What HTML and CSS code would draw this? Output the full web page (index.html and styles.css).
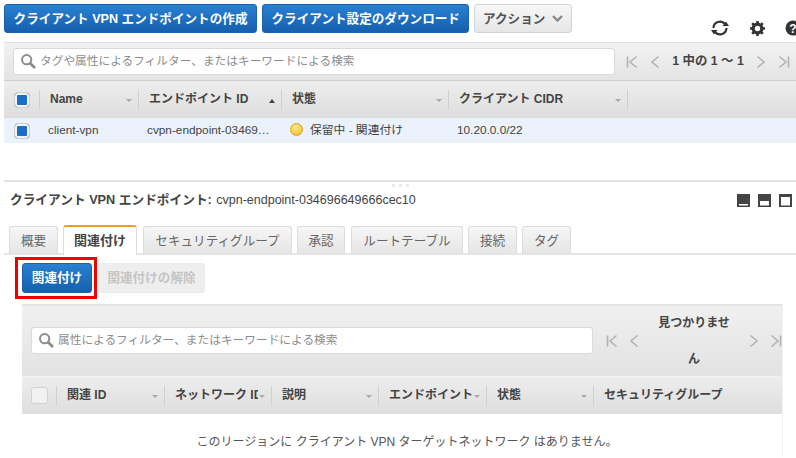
FILE: index.html
```html
<!DOCTYPE html>
<html lang="ja">
<head>
<meta charset="utf-8">
<title>クライアント VPN エンドポイント</title>
<link rel="stylesheet" href="styles.css">
</head>
<body>
<svg class="defs" width="0" height="0" aria-hidden="true">
  <defs>
    <symbol id="mag" viewBox="0 0 18 18"><circle cx="7.5" cy="7.5" r="5.2" fill="none" stroke="#8c8c8c" stroke-width="2.2"/><path d="M11.5 11.5L16 16" stroke="#8c8c8c" stroke-width="3" stroke-linecap="round"/></symbol>
    <symbol id="first" viewBox="0 0 12 14"><path d="M1.5 1.5v11M10.5 1.5L4 7l6.5 5.500" fill="none" stroke="#b2b2b2" stroke-width="1.600"/></symbol>
    <symbol id="prev" viewBox="0 0 12 14"><path d="M9.500 1.500L3 7l6.500 5.500" fill="none" stroke="#b2b2b2" stroke-width="1.600"/></symbol>
    <symbol id="next" viewBox="0 0 12 14"><path d="M2.500 1.500L9 7l-6.500 5.500" fill="none" stroke="#b2b2b2" stroke-width="1.600"/></symbol>
    <symbol id="last" viewBox="0 0 12 14"><path d="M10.500 1.500v11M1.500 1.500L8 7l-6.500 5.500" fill="none" stroke="#b2b2b2" stroke-width="1.600"/></symbol>
  </defs>
</svg>

<div class="toolbar">
  <button class="btn primary b-create">クライアント VPN エンドポイントの作成</button>
  <button class="btn primary b-download">クライアント設定のダウンロード</button>
  <button class="btn neutral b-action">アクション<svg class="caret" width="11" height="7" viewBox="0 0 11 7"><path d="M1 1l4.500 4.500L10 1" fill="none" stroke="#8a8a8a" stroke-width="2.400"/></svg></button>
  <div class="tools">
    <svg class="tool-refresh" width="20" height="18" viewBox="0 0 20 18"><path d="M3.500 9a6.500 6.500 0 0 1 11.500-4" fill="none" stroke="#333" stroke-width="2.200"/><path d="M16.500 9a6.500 6.500 0 0 1-11.500 4" fill="none" stroke="#333" stroke-width="2.200"/><path d="M12.500 7h6.500l-3-4.500zM7.500 11H1l3 4.500z" fill="#333"/></svg>
    <svg class="tool-gear" width="15" height="15" viewBox="0 0 15 15"><circle cx="7.500" cy="7.500" r="4.300" fill="none" stroke="#333" stroke-width="3.200"/><path d="M7.500 0v15M0 7.500h15M2.200 2.200l10.600 10.600M12.800 2.200L2.200 12.800" stroke="#333" stroke-width="2.600" stroke-dasharray="3 9 3"/></svg>
    <svg class="tool-help" width="11" height="16" viewBox="0 0 11 16"><circle cx="8" cy="8" r="7.500" fill="#333"/><text x="8" y="12.500" text-anchor="middle" class="help-q">?</text></svg>
  </div>
</div>

<div class="filter-band">
  <div class="search">
    <svg width="16" height="16"><use href="#mag"/></svg>
    <span>タグや属性によるフィルター、またはキーワードによる検索</span>
  </div>
  <div class="pager pager-top">
    <svg width="12" height="14"><use href="#first"/></svg>
    <svg width="12" height="14"><use href="#prev"/></svg>
    <b class="count">1 中の 1 ～ 1</b>
    <svg width="12" height="14"><use href="#next"/></svg>
    <svg width="12" height="14"><use href="#last"/></svg>
  </div>
</div>

<div class="thead thead-top">
  <div class="cell check-cell"><span class="check on"></span></div>
  <div class="cell">Name<i class="tri"></i></div>
  <div class="cell">エンドポイント ID<i class="tri up"></i></div>
  <div class="cell">状態<i class="tri"></i></div>
  <div class="cell">クライアント CIDR<i class="tri"></i></div>
</div>
<div class="row">
  <div class="rcell check-cell"><span class="check on"></span></div>
  <div class="rcell">client-vpn</div>
  <div class="rcell">cvpn-endpoint-03469…</div>
  <div class="rcell"><span class="dot"></span>保留中 - 関連付け</div>
  <div class="rcell">10.20.0.0/22</div>
</div>

<div class="splitter"><span></span><span></span><span></span></div>

<div class="detail-head">
  <div class="detail-title"><b>クライアント VPN エンドポイント:</b> cvpn-endpoint-034696649666cec10</div>
  <div class="views">
    <svg width="13" height="13" viewBox="0 0 13 13"><rect width="13" height="13" fill="#444"/><rect x="2" y="10" width="9" height="1.500" fill="#fff"/></svg>
    <svg width="13" height="13" viewBox="0 0 13 13"><rect width="13" height="13" fill="#444"/><rect x="2" y="7" width="9" height="4.500" fill="#fff"/></svg>
    <svg width="13" height="13" viewBox="0 0 13 13"><rect width="13" height="13" fill="#444"/><rect x="2" y="3" width="9" height="8.500" fill="#fff"/></svg>
  </div>
</div>

<div class="tabs">
  <div class="tab t1">概要</div>
  <div class="tab active t2">関連付け</div>
  <div class="tab t3">セキュリティグループ</div>
  <div class="tab t4">承認</div>
  <div class="tab t5">ルートテーブル</div>
  <div class="tab t6">接続</div>
  <div class="tab t7">タグ</div>
</div>

<div class="actions">
  <div class="highlight"><button class="btn primary b-assoc">関連付け</button></div>
  <button class="btn disabled b-dis">関連付けの解除</button>
</div>

<div class="panel">
  <div class="panel-filter">
    <div class="search search-inner">
      <svg width="16" height="16"><use href="#mag"/></svg>
      <span>属性によるフィルター、またはキーワードによる検索</span>
    </div>
    <div class="pager pager-inner">
      <svg width="12" height="14"><use href="#first"/></svg>
      <svg width="12" height="14"><use href="#prev"/></svg>
      <b class="none">見つかりません</b>
      <svg width="12" height="14"><use href="#next"/></svg>
      <svg width="12" height="14"><use href="#last"/></svg>
    </div>
  </div>
  <div class="thead thead-inner">
    <div class="cell check-cell"><span class="check"></span></div>
    <div class="cell">関連 ID<i class="tri"></i></div>
    <div class="cell"><span class="clip">ネットワーク ID</span><i class="tri"></i></div>
    <div class="cell">説明<i class="tri"></i></div>
    <div class="cell"><span class="clip">エンドポイント</span><i class="tri"></i></div>
    <div class="cell">状態<i class="tri"></i></div>
    <div class="cell last">セキュリティグループ</div>
  </div>
  <div class="empty">このリージョンに クライアント VPN ターゲットネットワーク はありません。</div>
</div>
</body>
</html>
```
FILE: styles.css
```css
* { box-sizing: border-box; }
html, body { margin: 0; padding: 0; }
body {
  width: 796px;
  height: 458px;
  overflow: hidden;
  background: #fff;
  color: #444;
  font: 12px/16px "Liberation Sans", "Noto Sans CJK JP", sans-serif;
}
.defs { position: absolute; }
svg { display: block; flex: none; }

/* buttons */
.btn {
  display: flex;
  align-items: center;
  justify-content: center;
  height: 29px;
  padding: 0;
  border-radius: 3px;
  font: bold 12.6px/16px "Liberation Sans", "Noto Sans CJK JP", sans-serif;
  white-space: nowrap;
}
.primary {
  color: #fff;
  border: 1px solid #1a62ad;
  background: linear-gradient(#2a80d2, #155fae);
}
.neutral {
  color: #555;
  border: 1px solid #d4d4d4;
  background: linear-gradient(#f7f7f7, #e6e6e6);
}
.disabled {
  color: #c4c4c4;
  border: 1px solid #eaeaea;
  background: #eeeeee;
}
.b-create { width: 254px; }
.b-download { width: 208px; margin-left: 5px; }
.b-action { width: 98px; margin-left: 5px; }
.caret { margin-left: 7px; }
.b-assoc { width: 70px; height: 30px; }
.b-dis { width: 107px; height: 30px; }

/* top toolbar */
.toolbar {
  display: flex;
  height: 42px;
  padding: 4px 0 0 4px;
}
.tools {
  display: flex;
  align-items: center;
  height: 18px;
  margin-top: 15px;
  margin-left: 138px;
}
.tool-gear { margin-left: 20px; }
.tool-help { margin-left: 20px; }
.help-q { fill: #fff; font: bold 12px "Liberation Sans", sans-serif; }

/* filter band */
.filter-band {
  display: flex;
  align-items: center;
  height: 38px;
  margin-left: 4px;
  padding: 0 0 0 9px;
  border-top: 1px solid #e0e0e0;
  background: linear-gradient(#f2f2f2, #e4e4e4);
}
.search {
  display: flex;
  align-items: center;
  gap: 4px;
  width: 602px;
  height: 27px;
  padding-left: 6px;
  padding-bottom: 1px;
  border: 1px solid #dadada;
  border-radius: 3px;
  background: #fff;
  color: #8c8c8c;
  font-size: 11.7px;
}
.pager {
  display: flex;
  align-items: center;
  color: #444;
}
.pager-top { margin-left: 11px; }
.pager-top svg:nth-child(2) { margin-left: 11px; }
.pager-top svg:nth-child(4) { margin-right: 11px; }
.count {
  width: 84px;
  margin-left: 5px;
  margin-right: 5px;
  padding-bottom: 1px;
  text-align: center;
  font-weight: bold;
  font-size: 12.4px;
  white-space: nowrap;
}

/* tables */
.thead {
  display: grid;
  align-items: center;
  height: 38px;
  font-weight: bold;
  color: #444;
  border-top: 1px solid #cfcfcf;
  background: linear-gradient(#ededed, #dedede);
}
.thead-top {
  grid-template-columns: 36px 99px 143px 167px 179px;
  margin-left: 4px;
}
.cell {
  position: relative;
  display: flex;
  align-items: center;
  height: 20px;
  padding-left: 10px;
  padding-right: 12px;
  padding-bottom: 2px;
  border-right: 1px solid #d0d0d0;
  white-space: nowrap;
}
.cell.last { border-right: 0; padding-right: 0; }
.cell.check-cell { padding: 0 0 0 10px; }
.check {
  display: block;
  flex: none;
  width: 14px;
  height: 14px;
  border: 1px solid #d2d2d2;
  border-radius: 3px;
  background: #f2f2f2;
}
.check.on {
  width: 16px;
  height: 16px;
  border: 1px solid #cfcfcf;
  border-radius: 4px;
  background: #1b6fc8;
  box-shadow: inset 0 0 0 2px #f4f4f4;
}
.tri {
  position: absolute;
  right: 6px;
  top: 9px;
  width: 0;
  height: 0;
  border-left: 3.500px solid transparent;
  border-right: 3.500px solid transparent;
  border-top: 3.500px solid #a8a8a8;
}
.tri.up {
  border-top: 0;
  border-bottom: 4px solid #444;
}
.row {
  display: grid;
  grid-template-columns: 36px 99px 143px 167px 179px;
  align-items: center;
  height: 25px;
  margin-left: 4px;
  background: #ebf2fb;
  color: #444;
  font-size: 11.8px;
}
.rcell {
  display: flex;
  align-items: center;
  padding-left: 8px;
  padding-bottom: 2px;
  white-space: nowrap;
  overflow: hidden;
}
.rcell.check-cell { padding: 0 0 0 10px; overflow: visible; }
.dot {
  flex: none;
  width: 13px;
  height: 13px;
  margin-right: 7px;
  border-radius: 50%;
  border: 1px solid #d6a21c;
  background: radial-gradient(circle at 40% 30%, #ffe98a, #f4b51e);
}

/* splitter */
.splitter {
  display: flex;
  justify-content: center;
  gap: 4px;
  height: 10px;
  margin-top: 37px;
  margin-left: 4px;
  border-top: 2px solid #e2e2e2;
  padding-top: 2px;
}
.splitter span {
  width: 3px;
  height: 3px;
  border: 1px solid #d0d0d0;
  border-radius: 50%;
}

/* detail */
.detail-head {
  display: flex;
  justify-content: space-between;
  align-items: center;
  height: 16px;
  margin-top: 2px;
  padding: 0 4px 0 10px;
  font-size: 12.5px;
}
.detail-title b { font-weight: bold; font-size: 12.7px; margin-right: 1px; }
.views { display: flex; gap: 8px; }

.tabs {
  display: flex;
  align-items: flex-end;
  height: 36px;
  margin-top: 11px;
  margin-left: 4px;
  padding: 7px 0 0 5px;
  gap: 5px;
  border-bottom: 2px solid #e6e6e6;
}
.tab {
  display: flex;
  align-items: center;
  justify-content: center;
  height: 28px;
  margin-bottom: -1px;
  border: 1px solid #dddddd;
  border-bottom: 0;
  border-radius: 3px 3px 0 0;
  background: linear-gradient(#f6f6f6, #e5e5e5);
  color: #666;
  font-size: 12.6px;
  white-space: nowrap;
}
.tab.active {
  height: 30px;
  margin-bottom: -2px;
  background: #fff;
  color: #444;
  font-weight: bold;
  font-size: 13px;
  border-top: 2px solid #f39c1f;
}
.t1 { width: 49px; }
.t2 { width: 74px; }
.t3 { width: 149px; margin-left: 1px; }
.t4 { width: 48px; }
.t5 { width: 112px; margin-left: 1px; }
.t6 { width: 49px; }
.t7 { width: 49px; }

.actions {
  display: flex;
  align-items: center;
  height: 42px;
  margin-top: 2px;
  margin-left: 15px;
  gap: 1px;
}
.highlight {
  display: flex;
  align-items: center;
  height: 42px;
  width: 82px;
  padding-left: 4px;
  border: 3px solid #f00000;
}

/* panel */
.panel {
  width: 761px;
  margin-top: 5px;
  margin-left: 22px;
  border-right: 1px solid #f3f3f3;
}
.panel-filter {
  display: flex;
  align-items: center;
  height: 72px;
  padding-left: 9px;
  border-top: 2px solid #e4e4e4;
  background: linear-gradient(#f0f0f0, #e2e2e2);
}
.search-inner { width: 563px; margin-top: -1px; }
.pager-inner { margin-left: 13px; }
.pager-inner svg:nth-child(2) { margin-left: 10px; }
.pager-inner svg:nth-child(4) { margin-right: 10px; }
.none {
  width: 108px;
  font-weight: bold;
  line-height: 36px;
  text-align: center;
  padding: 0 15px;
}
.thead-inner {
  grid-template-columns: 35px 108px 107px 107px 108px 107px 1fr;
  border-top: 1px solid #f2f2f2;
}
.clip { overflow: hidden; }
.thead-inner .cell { padding-right: 13px; }
.thead-inner .cell.check-cell { padding: 0 0 0 9px; }
.thead-inner .check { width: 17px; height: 17px; }
.empty {
  height: 43px;
  padding: 20px 0 0 10px;
  text-align: center;
  color: #555;
}
```
